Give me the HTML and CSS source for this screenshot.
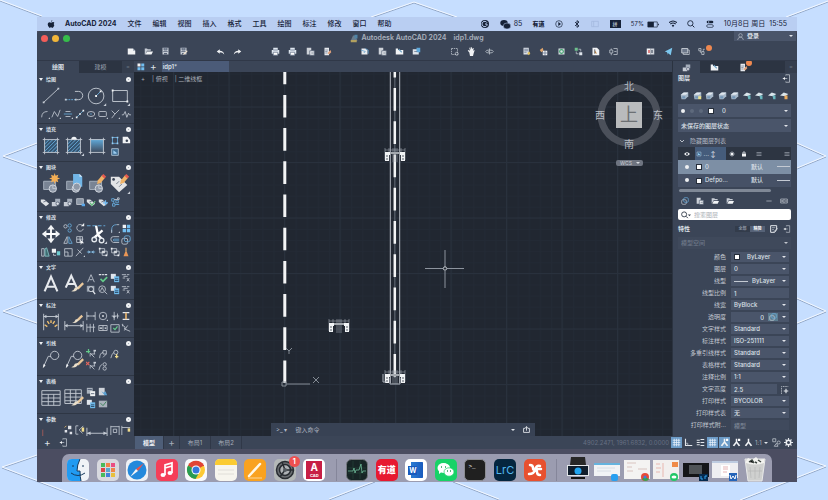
FILE: index.html
```html
<!DOCTYPE html>
<html lang="zh-CN">
<head>
<meta charset="utf-8">
<meta name="viewport" content="width=device-width, initial-scale=1">
<title>Autodesk AutoCAD 2024 - idp1.dwg</title>
<link rel="stylesheet" href="styles.css">
</head>
<body>
<svg class="defs" width="0" height="0" aria-hidden="true">
  <defs>
    <!-- large palette icons, 24 x 24 -->
    <symbol id="line" viewBox="0 0 24 24"><path d="M4 19 20 4" class="s"/><path d="M3 18h2v2H3zM19 3h2v2h-2z" class="f"/></symbol>
    <symbol id="pline" viewBox="0 0 24 24"><path d="M13 7h4a4.500 4.500 0 0 1 0 9h-2" class="s"/><path d="M3 16h12" class="b" stroke-dasharray="2 1"/><path d="M2 15h2v2H2zM13 15h2v2h-2z" class="f"/></symbol>
    <symbol id="circle" viewBox="0 0 24 24"><circle cx="11" cy="12" r="8.500" class="s"/><path d="m11 12 5-5" class="b"/><path d="M10 11h2v2h-2zM15 6h2v2h-2z" class="w"/><path d="M22 20v3h-3z" class="f"/></symbol>
    <symbol id="rect" viewBox="0 0 24 24"><path d="M4 6h16v12H4z" class="s"/><path d="M3 5h2v2H3zM19 17h2v2h-2z" class="w"/><path d="M23 20v3h-3z" class="f"/></symbol>
    <symbol id="hatch" viewBox="0 0 24 24"><path d="M5 5h14v14H5z" fill="#34536f"/><path d="m5 10 5-5M5 14l9-9M5 18l13-13M8 19 19 8M12 19l7-7M16 19l3-3" class="b"/><path d="M3 5h18M3 19h18M5 3v18M19 3v18" class="s"/></symbol>
    <symbol id="hatch2" viewBox="0 0 24 24"><use href="#hatch"/><path d="M9 5q0-3 3-3t3 3z" class="w"/><path d="M23 20v3h-3z" class="f"/></symbol>
    <linearGradient id="g1" x1="0" y1="0" x2="0" y2="1"><stop offset="0" stop-color="#5fa8d8"/><stop offset="1" stop-color="#3e4a5d"/></linearGradient>
    <symbol id="grad" viewBox="0 0 24 24"><path d="M5 5h14v14H5z" fill="url(#g1)"/><path d="M3 5h18M3 19h18M5 3v18M19 3v18" class="s"/></symbol>
    <symbol id="blk" viewBox="0 0 24 24"><path d="M4 9h13v9H4z" fill="#798494" stroke="#aab3c0"/><circle cx="14" cy="17" r="4" fill="#8e98a7" stroke="#d5dae1"/><path d="M14 13v4h4" class="s"/></symbol>
    <symbol id="blk1" viewBox="0 0 24 24"><use href="#blk"/><path d="m16 0 1 3 3-1-1 3 3 1-3 1 1 3-3-1-1 3-1-3-3 1 1-3-3-1 3-1-1-3 3 1z" fill="#f3ae55"/></symbol>
    <symbol id="blk2" viewBox="0 0 24 24"><use href="#blk"/><path d="M11 1h7l3 3v11H11z" fill="#71b5e6"/><path d="M18 1v3h3" fill="#d9ecfa"/><circle cx="15" cy="15" r="4" fill="#8e98a7" stroke="#d5dae1"/></symbol>
    <symbol id="blk3" viewBox="0 0 24 24"><use href="#blk"/><path d="m12 12 1-4 5-6 3 3-5 6z" fill="#efb267"/><path d="m17 3 2-2 3 3-2 2z" fill="#e45a4f"/></symbol>
    <symbol id="tag" viewBox="0 0 24 24"><path d="M2 4h9l9 9-9 8-9-9z" fill="#e3e4e6"/><circle cx="5" cy="7" r="1.500" fill="#3b4557"/><path d="m8 12 3-3M11 15l3-3" stroke="#707987"/><path d="m12 12 1-4 5-6 3 3-5 6z" fill="#efb267"/><path d="m17 3 2-2 3 3-2 2z" fill="#e45a4f"/><path d="M23 20v3h-3z" class="f"/></symbol>
    <symbol id="move" viewBox="0 0 24 24"><path d="M12 4v16M4 12h16" stroke="#fff" stroke-width="2"/><path d="m12 2 4 5H8zM12 22l-4-5h8zM2 12l5-4v8zM22 12l-5 4V8z" class="w"/></symbol>
    <symbol id="trim" viewBox="0 0 24 24"><path d="M1 3h20" class="b" stroke-dasharray="4 2"/><path d="m11 3 2 10 4 4M18 8 9 16" stroke="#fff" stroke-width="2.500" fill="none"/><circle cx="9" cy="18" r="2.500" class="s2"/><circle cx="17" cy="19" r="2.500" class="s2"/><path d="M23 20v3h-3z" class="f"/></symbol>
    <symbol id="mtext" viewBox="0 0 24 24"><path d="m5 20 7-16 7 16M8 15h8" stroke="#e6e9ed" stroke-width="2.300" fill="none"/></symbol>
    <symbol id="brush" viewBox="0 0 24 24"><path d="m22 11-6 6" stroke="#e8c79b" stroke-width="2.500"/><path d="M17 15q-1 6-8 5 3-1 4-4z" fill="#eadfca"/></symbol>
    <symbol id="mtext2" viewBox="0 0 24 24"><path d="m3 16 6-13 6 13M5 12h8" stroke="#e6e9ed" stroke-width="2.300" fill="none"/><use href="#brush"/></symbol>
    <symbol id="dim" viewBox="0 0 24 24"><path d="M4 3v18M20 3v18M4 6h16" class="s"/><path d="m4 6 3-2v4zM20 6l-3 2V4z" class="f"/><path d="m8 17-3-2M10 14l-2-3M14 14l2-3M16 17l3-2M12 13v-3" stroke="#f0c070" stroke-width="1.500"/></symbol>
    <symbol id="dim2" viewBox="0 0 24 24"><path d="M2 11v10M22 11v10M2 16h20" class="s"/><path d="m2 16 3-2v4zM22 16l-3 2v-4z" class="f"/><path d="m21 5-5 5" stroke="#e8c79b" stroke-width="2.500"/><path d="M17 9q-1 5-7 4 3-1 4-4z" fill="#eadfca"/></symbol>
    <symbol id="lead" viewBox="0 0 24 24"><circle cx="16" cy="7" r="4.500" class="s"/><path d="M12 8H9L4 19" class="s"/><path d="m3 21 1-5 2 2z" class="w"/></symbol>
    <symbol id="lead2" viewBox="0 0 24 24"><use href="#lead"/><use href="#brush"/></symbol>
    <symbol id="table" viewBox="0 0 24 24"><path d="M2 4h20v16H2zM2 8h20M2 12h20M2 16h20M9 8v12M15 8v12" class="s"/></symbol>
    <symbol id="table2" viewBox="0 0 24 24"><path d="M2 3h18v15H2zM2 7h18M2 11h18M2 15h14M8 3v15M14 3v15" class="s"/><use href="#brush"/></symbol>
    <symbol id="par" viewBox="0 0 24 24"><path d="M3 5v14" stroke="#a05a5a"/></symbol>
    <symbol id="pdim" viewBox="0 0 24 24"><path d="M1 3v14M23 3v14M1 9h22" class="s"/><path d="m1 9 4-2v4zM23 9l-4-2v4z" class="f"/><path d="M9 15q3-4 6 0z" fill="#f0d890"/></symbol>
    <!-- small icons, 12 x 12 -->
    <symbol id="arc" viewBox="0 0 12 12"><path d="M2 10q0-7 7-7" class="s"/><path d="M12 10v2h-2z" class="f"/></symbol>
    <symbol id="spl" viewBox="0 0 12 12"><path d="M1 10 4 3l4 6 3-8" class="s"/><path d="M12 10v2h-2z" class="f"/></symbol>
    <symbol id="div" viewBox="0 0 12 12"><path d="M3 3h6M3 9h6" class="s"/><path d="M1 6h10" class="b"/><path d="M12 10v2h-2z" class="f"/></symbol>
    <symbol id="seg" viewBox="0 0 12 12"><path d="m2 10 8-8" class="b"/><path d="M1 9h2v2H1zM9 1h2v2H9zM5 5h2v2H5z" class="w"/></symbol>
    <symbol id="ell" viewBox="0 0 12 12"><ellipse cx="6" cy="6" rx="4.500" ry="3" class="s"/><path d="M5 6h2" class="b"/><path d="M12 10v2h-2z" class="f"/></symbol>
    <symbol id="rc" viewBox="0 0 12 12"><rect x="1" y="3" width="9" height="6" rx="1" class="s"/><path d="M12 10v2h-2z" class="f"/></symbol>
    <symbol id="ray" viewBox="0 0 12 12"><path d="m2 2 4 4 5-5M6 6l-4 5" class="s"/><path d="M12 10v2h-2z" class="f"/></symbol>
    <symbol id="zig" viewBox="0 0 12 12"><path d="M1 7h2l2-4 2 7 2-5 1 2h2" class="s"/></symbol>
    <symbol id="bnd" viewBox="0 0 12 12"><path d="M3 3h6v7H3z" class="b"/><path d="M2 2h2v2H2zM8 2h2v2H8zM2 9h2v2H2zM8 9h2v2H8z" fill="#9ccdf0"/></symbol>
    <symbol id="wipe" viewBox="0 0 12 12"><path d="M2 2h6l3 4v4H2z" class="w"/><circle cx="7" cy="7" r="1.500" fill="#3b4557"/></symbol>
    <symbol id="reg" viewBox="0 0 12 12"><path d="M2 2h8v8H2z" fill="#3e6c92" stroke="#b5c6d6"/><path d="M4 8V4l4 3v1z" fill="#9ccdf0"/></symbol>
    <symbol id="tg" viewBox="0 0 12 12"><path d="M1 3h4l6 5-4 3-6-5z" fill="#dfe2e6"/><path d="m4 6 3-1" stroke="#596478"/></symbol>
    <symbol id="blks" viewBox="0 0 12 12"><path d="M1 6h6v5H1z" class="f"/><path d="M5 2h6v5H5z" fill="#a4adba"/><circle cx="8" cy="8" r="2" fill="#e0e4ea" stroke="#596478"/></symbol>
    <symbol id="img" viewBox="0 0 12 12"><path d="M2 2h8v7H2z" fill="#8b96a5" stroke="#c0c7d0"/><path d="M8 8h4v3H8z" fill="#5aa8ea"/></symbol>
    <symbol id="tgg" viewBox="0 0 12 12"><use href="#tg"/><path d="m5 7 2 3 4-5" stroke="#65bb7d" stroke-width="1.500" fill="none"/></symbol>
    <symbol id="tgb" viewBox="0 0 12 12"><use href="#tg"/><path d="M9 4v6M6 7h6" stroke="#6fb8f0" stroke-width="1.500"/></symbol>
    <symbol id="net" viewBox="0 0 12 12"><path d="M2 2h3v3H2zM7 4h3v3H7zM3 8h3v3H3zM8 9h3M4 5l1 3M6 9h4" class="b"/><path d="M5 3h4M9 1h2v2H9z" class="s"/></symbol>
    <symbol id="copy" viewBox="0 0 12 12"><circle cx="3" cy="4" r="2" class="s"/><circle cx="8" cy="3" r="2" class="b"/><circle cx="8" cy="9" r="2" class="b"/></symbol>
    <symbol id="rot" viewBox="0 0 12 12"><path d="M9 3a4 4 0 1 0 1 4" class="s"/><path d="M7 4h4V0z" class="w"/></symbol>
    <symbol id="mir" viewBox="0 0 12 12"><path d="M5 2v8H1z" class="s"/><path d="M7 2v8h4z" class="b"/></symbol>
    <symbol id="str" viewBox="0 0 12 12"><path d="M2 2h7v7H2zM2 5h8M6 2v7" class="s"/><path d="m6 5 5 5H8l-1 2z" class="w"/></symbol>
    <symbol id="fil" viewBox="0 0 12 12"><path d="M2 11V8q0-6 6-6" class="b"/><path d="M8 2h3M2 8v4" class="s"/><path d="M12 10v2h-2z" class="f"/></symbol>
    <symbol id="arr" viewBox="0 0 12 12"><path d="M2 2h4v4H2z" class="w"/><path d="M7 2h4v4H7zM2 7h4v4H2zM7 7h4v4H7z" fill="#72bdf0"/></symbol>
    <symbol id="off" viewBox="0 0 12 12"><path d="M11 2H4Q1 2 1 5t3 4h7" class="s"/><path d="M11 5H5q-1 0-1 1t1 1h6" class="b"/></symbol>
    <symbol id="cub" viewBox="0 0 12 12"><rect x="1" y="4" width="7" height="7" rx="2" class="s"/><rect x="4" y="1" width="7" height="7" rx="2" class="b"/></symbol>
    <symbol id="ali" viewBox="0 0 12 12"><path d="M2 2h3v9H2z" class="s"/><path d="m6 2 2-1 3 10H6z" fill="#3e6c72" stroke="#86c3c7"/></symbol>
    <symbol id="chg" viewBox="0 0 12 12"><path d="M1 2h5v5H1z" class="w"/><path d="M7 5h4v5H7z" fill="#6fcbd0"/><path d="M3 8v2h3" class="s"/></symbol>
    <symbol id="scl" viewBox="0 0 12 12"><path d="M2 2h9v9H2zM2 6h4v5" class="s"/></symbol>
    <symbol id="brk" viewBox="0 0 12 12"><path d="m1 11 9-10M3 3l5 5" class="s"/><path d="M12 10v2h-2z" class="f"/></symbol>
    <symbol id="joi" viewBox="0 0 12 12"><path d="M1 6h10" class="b"/><path d="m5 6-2-2v4zM7 6l2-2v4z" fill="#9ccdf0"/></symbol>
    <symbol id="grp" viewBox="0 0 12 12"><path d="M2 2h6v5H2zM5 5h6v5H5z" class="s"/><path d="M1 1h2v2H1zM9 9h2v2H9zM5 5h3v2H5z" class="w"/></symbol>
    <symbol id="cln" viewBox="0 0 12 12"><path d="M6 1v6" stroke="#d7a46b" stroke-width="1.500"/><path d="M5 6h2l2 5H3z" fill="#e99555"/></symbol>
    <symbol id="A" viewBox="0 0 12 12"><path d="m2 11 4-9 4 9M4 8h4" class="s"/></symbol>
    <symbol id="chk" viewBox="0 0 12 12"><path d="M1 2h3M5 2h2M8 2h3" class="s2"/><path d="m3 7 3 3 5-5" stroke="#64c98a" stroke-width="2" fill="none"/></symbol>
    <symbol id="fld" viewBox="0 0 12 12"><path d="M1 1h6v6H1z" fill="#dfe5ec"/><path d="M5 4h6v7H5z" fill="#6fbbec"/><path d="M6 7h4M6 9h4" stroke="#25405c"/></symbol>
    <symbol id="eq" viewBox="0 0 12 12"><path d="M1 2h5M3 4h5M2 6h3M7 6l3 4M10 6l-3 4M7 2h3" class="s"/></symbol>
    <symbol id="fnd" viewBox="0 0 12 12"><path d="M1 1h9v7H1z" fill="#98a2b0"/><circle cx="6" cy="5" r="3" fill="#3b4557" stroke="#dde1e6"/><path d="m8 7 3 4" class="s2"/></symbol>
    <symbol id="mag" viewBox="0 0 12 12"><circle cx="5" cy="5" r="4" class="s"/><path d="m8 8 3 3M3 7l2-4 2 4" class="s"/></symbol>
    <symbol id="dl" viewBox="0 0 12 12"><path d="M1 1v10M11 1v10M1 6h10" class="s"/><path d="m1 6 2-1v2zM11 6 9 5v2z" class="f"/></symbol>
    <symbol id="dr" viewBox="0 0 12 12"><circle cx="6" cy="6" r="4.500" class="s"/><path d="M5 5h2v2H5z" class="w"/><path d="M12 10v2h-2z" class="f"/></symbol>
    <symbol id="do" viewBox="0 0 12 12"><path d="M5 1v10M2 6h9M9 3v6" class="s"/><path d="m5 9-2-3h4z" class="f"/></symbol>
    <symbol id="ds" viewBox="0 0 12 12"><path d="M2 2h8M2 10h8" class="s2"/><path d="M6 2v8" stroke="#e6b36b" stroke-width="2"/></symbol>
    <symbol id="dc" viewBox="0 0 12 12"><path d="M1 1v10M5 1v10M9 1v10M1 5h10" class="s"/></symbol>
    <symbol id="tol" viewBox="0 0 12 12"><path d="M1 3h10v6H1zM6 3v6" class="s"/><path d="M2 6h3M8 6h2" class="s2"/></symbol>
    <symbol id="ins" viewBox="0 0 12 12"><path d="M1 2h10M1 2v9h10V2" class="s"/><path d="m4 6 2 2 3-4" stroke="#64c98a" stroke-width="1.500" fill="none"/></symbol>
    <symbol id="jog" viewBox="0 0 12 12"><path d="m1 2 4 3-1 2 7 3M8 3 4 9M2 1v3" class="s"/></symbol>
    <symbol id="pbx" viewBox="0 0 12 12"><path d="M1 1v11M11 1v11M1 2h10M4 5h4v4H4z" class="s"/></symbol>
    <symbol id="pbl" viewBox="0 0 12 12"><path d="M1 1v11M1 3h10" class="s"/><path d="M8 4h3v4H8z" fill="#f0dc8c"/></symbol>
    <symbol id="l" viewBox="0 0 12 12"><path d="M5 9V5l5 5M6 6h5M10 2v4" class="s"/><path d="M9 1h3v2H9z" class="f"/></symbol>
    <symbol id="l1" viewBox="0 0 12 12"><use href="#l"/><path d="M3 0v5M0 3h5" stroke="#64c98a" stroke-width="1.500"/></symbol>
    <symbol id="l2" viewBox="0 0 12 12"><use href="#l"/><path d="m0 1 4 4M4 1 0 5" stroke="#e2655c" stroke-width="1.500"/></symbol>
    <symbol id="l3" viewBox="0 0 12 12"><path d="M2 11q0-6 4-7M6 10l4-4" class="s"/><path d="M6 2h4v4H6z" class="s"/></symbol>
    <symbol id="l4" viewBox="0 0 12 12"><path d="M1 11q1-6 4-7" class="s"/><circle cx="8" cy="4" r="2" class="s"/><circle cx="8" cy="9" r="2" class="s"/></symbol>
    <symbol id="l5" viewBox="0 0 12 12"><path d="M1 11q1-6 4-7" class="s"/><circle cx="7" cy="4" r="2.500" class="s"/><path d="M8 6v5M6 9h4" stroke="#f0dc8c" stroke-width="1.500"/></symbol>
    <symbol id="td" viewBox="0 0 12 12"><path d="M1 1h7v7H1z" fill="#aab2bd"/><path d="M5 5h6v6H5z" class="w"/><path d="M6 8h4M2 3h5" stroke="#4b586d"/></symbol>
    <symbol id="tb" viewBox="0 0 12 12"><path d="M1 1h7v9H1z" fill="#cfd4db"/><path d="m4 5 3 2 2-2 2 5H8z" fill="#5aa0d2"/></symbol>
    <symbol id="tgn" viewBox="0 0 12 12"><path d="M1 2h10v8H1z" fill="#a9b1bc"/><path d="m3 5 3 3 4-5" stroke="#337f50" fill="none"/></symbol>
    <symbol id="gc" viewBox="0 0 12 12"><path d="M6 1h4v4H6zM2 6h3v3H2zM8 8h3v3H8z" fill="#dfe2e8"/><path d="m2 3 2-2" stroke="#f0c070"/></symbol>
    <symbol id="lk" viewBox="0 0 12 12"><path d="M4 1H1v10h3M10 1 5 6l4 4" class="s"/><path d="M8 3h3v5H8z" fill="#f0dc8c"/></symbol>
    <symbol id="new" viewBox="0 0 12 12"><path d="M1 2h7l3 3v5H1z" class="w"/><path d="M8 2v3h3" fill="#9aa4b3"/></symbol>
    <symbol id="open" viewBox="0 0 12 12"><path d="M1 2h3l1 1h4v2H4l-2 5H1z" class="f"/><path d="M4 6h8l-2 4H2z" class="w"/></symbol>
    <symbol id="save" viewBox="0 0 12 12"><path d="M2 1h8v9H2z" class="f"/><path d="M4 1h4v3H4zM3 6h6" stroke="#566175" fill="#8d98a7"/><path d="M4 8h4v2H4z" fill="#566175"/></symbol>
    <symbol id="saveas" viewBox="0 0 12 12"><use href="#save"/><path d="m6 10 5-5" stroke="#f0e3d0" stroke-width="1.500"/></symbol>
    <symbol id="undo" viewBox="0 0 12 12"><path d="m1 6 4-3v2q5 0 6 5-2-3-6-3v2z" class="w"/></symbol>
    <symbol id="redo" viewBox="0 0 12 12"><path d="M11 6 7 3v2q-5 0-6 5 2-3 6-3v2z" class="w"/></symbol>
    <symbol id="prt" viewBox="0 0 12 12"><path d="M3 1h6v3H3zM1 4h10v5H1z" fill="#dfe7f0"/><path d="M3 7h6v4H3z" fill="#fff" stroke="#65748b"/><path d="M3 4h6" stroke="#65748b"/></symbol>
    <symbol id="pub" viewBox="0 0 12 12"><path d="M1 1h6v9H1z" fill="#cdd2d9"/><path d="M5 5h6v6H5z" fill="#e9ecf0" stroke="#5a6679"/><path d="M7 8h3" stroke="#5a6679"/></symbol>
    <symbol id="pg" viewBox="0 0 12 12"><path d="M2 1h6v10H2z" fill="#e6e9ee"/><path d="M3 4h4M3 6h3M3 8h3" stroke="#77849a"/><path d="m6 8 4-4 1 3-3 3z" fill="#e3a37c"/></symbol>
    <symbol id="imp" viewBox="0 0 12 12"><path d="M2 2h5l3 2v6H2z" fill="#e9ecf0"/><path d="m1 4 6 2-2 2M7 2l4 2v5" stroke="#5e9cc9" fill="none"/></symbol>
    <symbol id="exp" viewBox="0 0 12 12"><path d="M1 2h3v2h7v6H1z" class="w"/><path d="m5 3 4 4" stroke="#6fa4c7" stroke-width="1.500"/></symbol>
    <symbol id="mapi" viewBox="0 0 12 12"><path d="M1 3h8v7H1z" fill="#dfe4ea"/><path d="M6 1h5v6H6z" fill="#5ea9dc"/><path d="M3 6h4" stroke="#63738b"/></symbol>
    <symbol id="zw" viewBox="0 0 12 12"><path d="M2 2h8v8H2z" class="s" stroke-dasharray="2 1"/><circle cx="9" cy="9" r="2" class="s"/></symbol>
    <symbol id="hand" viewBox="0 0 12 12"><path d="m3 7-2-2 1-1 2 1-1-4h1l1 3V0h1l1 3 1-2 1 1-1 3 2-1v1L9 8l-1 4H4z" class="w"/></symbol>
    <symbol id="orb" viewBox="0 0 12 12"><ellipse cx="6" cy="6" rx="5" ry="2" class="s"/><path d="M6 2v8M4 6h1" class="s"/></symbol>
    <symbol id="prop" viewBox="0 0 12 12"><path d="M2 1h7v9H2z" fill="#d9dee5"/><path d="M3 3h5M3 5h5M3 7h3" stroke="#63738b"/><path d="m7 8 3-2 1 3-2 2z" fill="#e2c15d"/></symbol>
    <symbol id="edit" viewBox="0 0 12 12"><path d="M1 1h9v6l-3 4H1z" class="s2"/><path d="M3 4h5M3 7h3" class="s"/><path d="m6 10 5-5" class="s2"/></symbol>
    <symbol id="ttp" viewBox="0 0 12 12"><path d="M5 5h6v6H5z" class="w"/><path d="m1 4 4-3 1 4-3 2z" fill="#dda56d"/><path d="M8 5v6M5 8h6" stroke="#63738b"/></symbol>
    <symbol id="ref" viewBox="0 0 12 12"><path d="M2 2h8v8H2z" fill="#dce3e6"/><circle cx="6" cy="6" r="2.500" fill="none" stroke="#3ea16d" stroke-width="1.500"/></symbol>
    <symbol id="cmp" viewBox="0 0 12 12"><path d="M1 1h4v4H1z" fill="#6ec28d"/><path d="M7 7h4v4H7z" fill="#dfe5ec"/><path d="M6 3h3v3M3 6v3h3" class="s"/></symbol>
    <symbol id="pdf" viewBox="0 0 12 12"><path d="M2 1h6l3 3v7H2z" class="w"/><path d="M5 8V4l3 5z" fill="#c7883e"/><path d="M5 3v6" stroke="#434a56"/></symbol>
    <symbol id="sht" viewBox="0 0 12 12"><path d="M6 2h5v8H6M1 4h4v4H1zM3 2v2M3 8v3M7 6h3" class="s"/></symbol>
    <symbol id="dif" viewBox="0 0 12 12"><path d="M1 2h5v8H1z" class="w"/><path d="M6 2h5v8H6z" fill="#cfd4db"/><path d="M3 4h2v4H3z" fill="#d35c5c"/><path d="M7 4h2v4H7z" fill="#656e7d"/></symbol>
    <symbol id="send" viewBox="0 0 12 12"><path d="m1 6 10-5-2 10-4-3v3L4 7z" fill="#7cc7ee"/></symbol>
    <symbol id="cas" viewBox="0 0 12 12"><path d="M3 4h8v6H3z" class="s"/><path d="M1 2h8v6H1z" fill="#6d788b" stroke="#dfe4ea"/></symbol>
    <symbol id="nod" viewBox="0 0 12 12"><path d="M1 2h3v3H1zM5 6h3v4H5zM3 5v2h2M7 5V3h2" class="s"/></symbol>
    <symbol id="lay" viewBox="0 0 12 12"><path d="m1 5 4-3h6v5l-4 4H2z" fill="#a7b8c9"/><path d="m1 5 4-3h6L8 5z" fill="#e0e7ee"/><path d="M3 7h4v3H3z" fill="#7295b6"/></symbol>
    <symbol id="lay2" viewBox="0 0 12 12"><use href="#lay"/><path d="M7 7h4v4H7z" fill="#e9df8c"/></symbol>
    <symbol id="layf" viewBox="0 0 12 12"><path d="m0 6 5-4 6 2-4 3z" fill="#d9e4ea"/><path d="M6 6h4v5H7z" fill="#68b6bd"/></symbol>
    <symbol id="layo" viewBox="0 0 12 12"><path d="m0 6 5-4 6 2-4 3z" fill="#d9e4ea"/><path d="M6 6h4v5H6z" fill="#e9aa5c"/></symbol>
    <symbol id="pin" viewBox="0 0 12 12"><path d="M5 2V1h5v10H5v-1M1 6h6" class="s"/><path d="m1 6 3-2v4z" class="w"/></symbol>
    <symbol id="fol" viewBox="0 0 12 12"><path d="M1 2h4l1 1h4v2H4l-3 5z" class="f"/><path d="M4 6h8l-2 4H2z" class="w"/></symbol>
    <symbol id="lst" viewBox="0 0 12 12"><path d="M1 3h10M1 6h10M1 9h10" class="s"/></symbol>
    <symbol id="bars" viewBox="0 0 12 12"><path d="M1 3h4M1 6h4M1 9h4M6 2h5M6 6h5M6 10h5" class="s2"/></symbol>
    <symbol id="eye" viewBox="0 0 12 12"><path d="M0 6q6-7 12 0-6 7-12 0z" class="w"/><circle cx="6" cy="6" r="2" fill="#2d3542"/></symbol>
    <symbol id="sun" viewBox="0 0 12 12"><path d="M6 0v12M0 6h12M2 2l8 8M10 2l-8 8" class="s"/><circle cx="6" cy="6" r="3" class="w"/></symbol>
    <symbol id="lock" viewBox="0 0 12 12"><path d="M2 5h8v6H2z" class="w"/><path d="M4 5V2h4v3" class="s2"/></symbol>
    <symbol id="grid" viewBox="0 0 12 12"><path d="M1 3h10M1 6h10M1 9h10M3 1v10M6 1v10M9 1v10" stroke="#e8f2fb"/></symbol>
    <symbol id="ort" viewBox="0 0 12 12"><path d="M2 1v9h9" class="s2"/><path d="M5 10V7H2" class="s"/></symbol>
    <symbol id="ann" viewBox="0 0 12 12"><path d="M5 1h2v4l4 5-2 1-3-4-3 4-2-1 4-5z" class="w"/></symbol>
    <symbol id="ann2" viewBox="0 0 12 12"><use href="#ann"/><path d="M8 1h3v3H8z" fill="#fff"/></symbol>
    <symbol id="iso" viewBox="0 0 12 12"><path d="M1 1h4v4H1zM6 7l-3 4h5z" class="s"/><circle cx="9" cy="6" r="2" class="s"/></symbol>
    <symbol id="gear" viewBox="0 0 12 12"><circle cx="6" cy="6" r="3" fill="none" stroke="#eef1f4" stroke-width="2"/><path d="M6 0v3M6 9v3M0 6h3M9 6h3M2 2l2 2M8 8l2 2M10 2 8 4M4 8l-2 2" class="s2"/></symbol>
    <symbol id="opt" viewBox="0 0 12 12"><circle cx="6" cy="6" r="6" class="w"/><circle cx="6" cy="6" r="1.500" fill="#98a1b0"/></symbol>
    <symbol id="share" viewBox="0 0 12 12"><path d="M4 4H1v7h10V4H8M6 8V1M4 3l2-2 2 2" class="s2"/></symbol>
    <!-- clamp section used three times in the drawing -->
    <symbol id="clamp" viewBox="0 0 22 14"><path d="M1 2h20M1 0v12M21 0v12M5 0v5M17 0v5M9 0v14M13 0v14M11 0v14" stroke="#9ea5ae" stroke-width=".6"/><path d="M1 4h20v3h-5V6H6v1H1zM1 7h4v6H1zM17 7h4v6h-4z" fill="#f1f3f5"/><path d="M2 8h2M2 11h2M18 8h2M18 11h2M6 5h10" stroke="#303844" stroke-width=".8"/></symbol>
  </defs>
</svg>

<svg class="backdrop" viewBox="0 0 828 500" preserveAspectRatio="none" aria-hidden="true">
  <g class="edge-shadow"><path d="m0 1 42 16M371 18l43-15 43 15M786 18l42-16M37 144 3 157l34 12M37 299 3 312l34 12M37 456 2 468l86 33M797 144l29 13-29 12M797 299l29 13-29 12M797 457l29 10-86 34M375 482l-46 18M453 482l46 18"/></g>
  <g class="edge-light"><path d="m0 0 42 16M371 17l43-15 43 15M786 17l42-16M37 143 3 156l34 12M37 298 3 311l34 12M37 455 2 467l86 33M797 143l29 13-29 12M797 298l29 13-29 12M797 456l29 10-86 34M375 481l-46 18M453 481l46 18"/></g>
</svg>

<div class="screen">
  <header class="menubar">
    <svg class="apple" viewBox="0 0 12 12" aria-label="Apple"><path d="M8 0q0 2-2 3 0-2 2-3M6 4q4-2 5 0-2 2 0 4-1 3-3 4-1-1-2-1t-2 1Q1 10 1 6q1-4 5-2"/></svg>
    <nav class="menus" aria-label="菜单">
      <a href="#" class="appname">AutoCAD 2024</a><a href="#">文件</a><a href="#">编辑</a><a href="#">视图</a><a href="#">插入</a><a href="#">格式</a><a href="#">工具</a><a href="#">绘图</a><a href="#">标注</a><a href="#">修改</a><a href="#">窗口</a><a href="#">帮助</a>
    </nav>
    <div class="tray">
      <svg viewBox="0 0 12 12"><circle cx="6" cy="6" r="6"/><path d="M9 4a4 4 0 1 0 0 4V6H6" fill="none" stroke="#b9cef2" stroke-width="1.500"/></svg>
      <span class="wx"><svg viewBox="0 0 14 12"><ellipse cx="5" cy="4" rx="5" ry="4"/><ellipse cx="9" cy="8" rx="5" ry="4" stroke="#b9cef2" stroke-width=".7"/></svg>85</span>
      <b class="yd">有道</b>
      <svg viewBox="0 0 12 12"><circle cx="6" cy="6" r="5" fill="none" stroke="#162238"/><path d="m5 3 4 3-4 3z"/></svg>
      <svg viewBox="0 0 12 12"><path d="m3 3 6 6-3 2V1l3 2-6 6" fill="none" stroke="#162238" stroke-width="1.300"/></svg>
      <svg class="faint" viewBox="0 0 12 12"><path d="M1 2h10v8H1zM4 2v8" fill="none" stroke="#7c93bd"/></svg>
      <span class="ime">拼</span>
      <span class="batt">57%<svg viewBox="0 0 14 8"><path d="M1 1h11v6H1z" fill="none" stroke="#39475f"/><path d="M1 1h7v6H1zM13 3h1v2h-1z"/></svg></span>
      <svg viewBox="0 0 12 12"><path d="M0 4q6-5 12 0M2 6q4-3 8 0" fill="none" stroke="#162238" stroke-width="1.600"/><path d="m4 8 2 3 2-3q-2-2-4 0"/></svg>
      <svg viewBox="0 0 12 12"><circle cx="5" cy="5" r="4" fill="none" stroke="#162238" stroke-width="1.300"/><path d="m8 8 3 3" stroke="#162238" stroke-width="1.500"/></svg>
      <svg viewBox="0 0 12 12"><rect x="1" y="1" width="10" height="4" rx="2"/><rect x="1" y="7" width="10" height="4" rx="2" fill="none" stroke="#162238"/><circle cx="4" cy="3" r="1" fill="#b9cef2"/></svg>
      <time>10月8日 周日&nbsp; 15:55</time>
    </div>
  </header>

  <div class="window">
    <div class="titlebar">
      <div class="title-row">
        <div class="lights"><button aria-label="关闭"></button><button aria-label="最小化"></button><button aria-label="缩放"></button></div>
        <h1><svg viewBox="0 0 12 12"><path d="M1 9 4 2h3l3 7z" fill="#6a7c8c"/><path d="M1 8h8v3H1z" fill="#b2a15f"/><path d="M6 1h4v5H6z" fill="#4f83a6"/></svg>Autodesk AutoCAD 2024 <span>idp1.dwg</span></h1>
        <button class="login"><svg viewBox="0 0 12 12"><circle cx="6" cy="4" r="3" class="s"/><path d="M1 12q1-5 5-5t5 5" class="s"/></svg>登录<i class="caret"></i></button>
      </div>
      <div class="toolbar">
        <button aria-label="新建"><svg><use href="#new"/></svg></button><button aria-label="打开"><svg><use href="#open"/></svg></button><button aria-label="保存"><svg><use href="#save"/></svg></button><button aria-label="另存为"><svg><use href="#saveas"/></svg></button>
        <button class="first" aria-label="放弃"><svg><use href="#undo"/></svg></button><button aria-label="重做"><svg><use href="#redo"/></svg></button>
        <button class="first" aria-label="打印"><svg><use href="#prt"/></svg></button><button aria-label="批处理打印"><svg><use href="#prt"/></svg></button><button aria-label="发布"><svg><use href="#pub"/></svg></button><button aria-label="页面设置"><svg><use href="#pg"/></svg></button>
        <button class="first" aria-label="输入"><svg><use href="#imp"/></svg></button><button aria-label="附着"><svg><use href="#pub"/></svg></button><button aria-label="输出"><svg><use href="#exp"/></svg></button><button aria-label="地图"><svg><use href="#mapi"/></svg></button>
        <button class="first" aria-label="窗口缩放"><svg><use href="#zw"/></svg></button><button aria-label="平移"><svg><use href="#hand"/></svg></button><button aria-label="动态观察"><svg><use href="#orb"/></svg></button>
        <button class="first" aria-label="特性匹配"><svg><use href="#prop"/></svg></button><button aria-label="工具选项板"><svg><use href="#ttp"/></svg></button><button aria-label="参照"><svg><use href="#ref"/></svg></button><button aria-label="链接"><svg><use href="#cmp"/></svg></button><button aria-label="PDF"><svg><use href="#pdf"/></svg></button><button aria-label="图纸集"><svg><use href="#sht"/></svg></button>
        <button class="first" aria-label="比较"><svg><use href="#dif"/></svg></button><button aria-label="共享"><svg><use href="#send"/></svg></button><button aria-label="层叠"><svg><use href="#cas"/></svg></button><button class="badged" aria-label="活动"><svg><use href="#nod"/></svg></button>
      </div>
    </div>

    <div class="workspace">
      <aside class="palette">
        <div class="tabs"><button class="on">绘图</button><button class="off">建模</button><button aria-label="更多" class="more">=</button></div>
        <section><h2>绘图<svg><use href="#opt"/></svg></h2><div class="tools">
          <button class="big" aria-label="直线"><svg><use href="#line"/></svg></button><button class="big" aria-label="多段线"><svg><use href="#pline"/></svg></button><button class="big" aria-label="圆"><svg><use href="#circle"/></svg></button><button class="big" aria-label="矩形"><svg><use href="#rect"/></svg></button>
          <button aria-label="圆弧"><svg><use href="#arc"/></svg></button><button aria-label="样条曲线"><svg><use href="#spl"/></svg></button><button aria-label="等分"><svg><use href="#div"/></svg></button><button aria-label="点"><svg><use href="#seg"/></svg></button><button aria-label="椭圆"><svg><use href="#ell"/></svg></button><button aria-label="修订云线"><svg><use href="#rc"/></svg></button><button aria-label="射线"><svg><use href="#ray"/></svg></button><button aria-label="三维多段线"><svg><use href="#zig"/></svg></button>
        </div></section>
        <section><h2>填充<svg><use href="#opt"/></svg></h2><div class="tools">
          <button class="big" aria-label="图案填充"><svg><use href="#hatch"/></svg></button><button class="big" aria-label="编辑填充"><svg><use href="#hatch2"/></svg></button><button class="big" aria-label="渐变色"><svg><use href="#grad"/></svg></button><button aria-label="边界"><svg><use href="#bnd"/></svg></button><button aria-label="区域覆盖"><svg><use href="#wipe"/></svg></button><button aria-label="面域"><svg><use href="#reg"/></svg></button>
        </div></section>
        <section><h2>图块<svg><use href="#opt"/></svg></h2><div class="tools">
          <button class="big" aria-label="创建块"><svg><use href="#blk1"/></svg></button><button class="big" aria-label="插入块"><svg><use href="#blk2"/></svg></button><button class="big" aria-label="编辑块"><svg><use href="#blk3"/></svg></button><button class="big" aria-label="编辑属性"><svg><use href="#tag"/></svg></button>
          <button aria-label="定义属性"><svg><use href="#tg"/></svg></button><button aria-label="写块"><svg><use href="#blks"/></svg></button><button aria-label="替换块"><svg><use href="#blks"/></svg></button><button aria-label="基点"><svg><use href="#img"/></svg></button><button aria-label="同步属性"><svg><use href="#tgg"/></svg></button><button aria-label="管理属性"><svg><use href="#tgb"/></svg></button><button aria-label="参照管理"><svg><use href="#net"/></svg></button>
        </div></section>
        <section><h2>修改<svg><use href="#opt"/></svg></h2><div class="tools">
          <button class="big" aria-label="移动"><svg><use href="#move"/></svg></button><button aria-label="复制"><svg><use href="#copy"/></svg></button><button aria-label="旋转"><svg><use href="#rot"/></svg></button><button class="big" aria-label="修剪"><svg><use href="#trim"/></svg></button><button aria-label="圆角"><svg><use href="#fil"/></svg></button><button aria-label="阵列"><svg><use href="#arr"/></svg></button><button aria-label="镜像"><svg><use href="#mir"/></svg></button><button aria-label="拉伸"><svg><use href="#str"/></svg></button><button aria-label="偏移"><svg><use href="#off"/></svg></button><button aria-label="分解"><svg><use href="#cub"/></svg></button>
          <button aria-label="对齐"><svg><use href="#ali"/></svg></button><button aria-label="更改空间"><svg><use href="#chg"/></svg></button><button aria-label="缩放"><svg><use href="#scl"/></svg></button><button aria-label="打断"><svg><use href="#brk"/></svg></button><button aria-label="合并"><svg><use href="#joi"/></svg></button><button aria-label="编组"><svg><use href="#grp"/></svg></button><button aria-label="解组"><svg><use href="#grp"/></svg></button><button aria-label="清理"><svg><use href="#cln"/></svg></button>
        </div></section>
        <section><h2>文字<svg><use href="#opt"/></svg></h2><div class="tools">
          <button class="big" aria-label="多行文字"><svg><use href="#mtext"/></svg></button><button class="big" aria-label="文字样式"><svg><use href="#mtext2"/></svg></button><button aria-label="单行文字"><svg><use href="#A"/></svg></button><button aria-label="拼写检查"><svg><use href="#chk"/></svg></button><button aria-label="字段"><svg><use href="#fld"/></svg></button><button aria-label="缩放文字"><svg><use href="#eq"/></svg></button><button aria-label="查找"><svg><use href="#fnd"/></svg></button><button aria-label="替换"><svg><use href="#mag"/></svg></button><button aria-label="更新字段"><svg><use href="#fld"/></svg></button><button aria-label="对正"><svg><use href="#eq"/></svg></button>
        </div></section>
        <section><h2>标注<svg><use href="#opt"/></svg></h2><div class="tools">
          <button class="big" aria-label="标注"><svg><use href="#dim"/></svg></button><button class="big" aria-label="标注样式"><svg><use href="#dim2"/></svg></button><button aria-label="线性"><svg><use href="#dl"/></svg></button><button aria-label="半径"><svg><use href="#dr"/></svg></button><button aria-label="坐标"><svg><use href="#do"/></svg></button><button aria-label="间距"><svg><use href="#ds"/></svg></button><button aria-label="连续"><svg><use href="#dc"/></svg></button><button aria-label="公差"><svg><use href="#tol"/></svg></button><button aria-label="检验"><svg><use href="#ins"/></svg></button><button aria-label="折弯"><svg><use href="#jog"/></svg></button>
        </div></section>
        <section><h2>引线<svg><use href="#opt"/></svg></h2><div class="tools">
          <button class="big" aria-label="引线"><svg><use href="#lead"/></svg></button><button class="big" aria-label="引线样式"><svg><use href="#lead2"/></svg></button><button aria-label="添加引线"><svg><use href="#l1"/></svg></button><button aria-label="对齐引线"><svg><use href="#l3"/></svg></button><button aria-label="编辑引线"><svg><use href="#l5"/></svg></button><button class="fifth" aria-label="删除引线"><svg><use href="#l2"/></svg></button><button aria-label="合并引线"><svg><use href="#l4"/></svg></button>
        </div></section>
        <section><h2>表格<svg><use href="#opt"/></svg></h2><div class="tools">
          <button class="big" aria-label="表格"><svg><use href="#table"/></svg></button><button class="big" aria-label="表格样式"><svg><use href="#table2"/></svg></button><button aria-label="数据链接"><svg><use href="#td"/></svg></button><button aria-label="下载源"><svg><use href="#tb"/></svg></button><button class="fifth" aria-label="上载源"><svg><use href="#fld"/></svg></button><button aria-label="提取数据"><svg><use href="#tgn"/></svg></button>
        </div></section>
        <section><h2>参数<svg><use href="#opt"/></svg></h2><div class="tools">
          <button class="big" aria-label="约束"><svg><use href="#par"/></svg></button><button aria-label="几何约束"><svg><use href="#gc"/></svg></button><button aria-label="自动约束"><svg><use href="#lk"/></svg></button><button class="big" aria-label="标注约束"><svg><use href="#pdim"/></svg></button><button aria-label="显示约束"><svg><use href="#pbx"/></svg></button><button aria-label="隐藏约束"><svg><use href="#pbl"/></svg></button>
        </div></section>
      </aside>

      <main class="center">
        <div class="filetabs"><svg><use href="#arr"/></svg><button aria-label="新建选项卡" class="plus">+</button><button class="file">idp1*</button></div>
        <div class="canvas">
          <svg class="drawing" viewBox="134 72 538 364" preserveAspectRatio="xMidYMid slice" role="img" aria-label="图形">
            <defs>
              <pattern id="minor" x="7" y="7" width="11.100" height="11.100" patternUnits="userSpaceOnUse"><path d="M0 .5h12M.5 0v12" stroke="#232a35" fill="none"/></pattern>
              <pattern id="major" x="6.500" y="51" width="55.500" height="55.500" patternUnits="userSpaceOnUse"><path d="M0 .5h56M.5 0v56" stroke="#29313d" fill="none"/></pattern>
            </defs>
            <path d="M134 72h538v364H134z" fill="url(#minor)"/><path d="M134 72h538v364H134z" fill="url(#major)"/>
            <path d="M284.800 61.700V384" stroke="#f4f5f6" stroke-width="3" stroke-dasharray="22.600 10.600"/>
            <path d="M390.300 72v311M399.700 72v311" stroke="#b4bac2"/><path d="M394.800 72v306" stroke="#747c88" stroke-width=".8"/>
            <path d="M394.800 54.800V378" stroke="#f4f5f6" stroke-width="2.500" stroke-dasharray="22.600 10.650"/>
            <use href="#clamp" x="384" y="148" width="22" height="14"/><use href="#clamp" x="328" y="319" width="22" height="14"/><use href="#clamp" x="384" y="370" width="22" height="14"/>
            <path d="M383 374v8h3M390 378v6h10v-6" fill="none" stroke="#aeb4bd"/>
            <path d="M425 268.500h18M447 268.500h17M445 250v17M445 271v17" stroke="#8d949e"/><circle cx="445" cy="268.500" r="1.700" fill="none" stroke="#c3c8ce"/>
            <path d="M282 382h4v4h-4zM286 384h24M313 377l6 6M319 377l-6 6M286 348l3 3 3-3M289 351v3" fill="none" stroke="#8f969f" stroke-width=".9"/>
          </svg>
          <div class="viewlabel"><span>+</span><span>| 俯视</span><span>| 二维线框</span></div>
          <svg class="cube" viewBox="0 0 72 92" role="img" aria-label="ViewCube">
            <circle cx="36" cy="36" r="28" fill="none" stroke="#4b505a" stroke-width="7"/>
            <path d="M23 23h26v26H23z" fill="#b9bbbd"/>
            <g class="cubetext"><text x="36" y="11">北</text><text x="7" y="40">西</text><text x="65" y="40">东</text><text x="36" y="69">南</text><text x="36" y="42" class="top">上</text></g>
            <rect x="23" y="81" width="27" height="6" rx="2" fill="#6e7480"/><text x="33" y="86" class="wcs">WCS</text><path d="M43 83h4l-2 2z" fill="#d9dce0"/>
          </svg>
          <label class="command"><span>&gt;_ ▾</span><input type="text" placeholder="键入命令" aria-label="命令"><i class="caret"></i><svg><use href="#share"/></svg></label>
        </div>
      </main>

      <aside class="inspector">
        <div class="tabs"><button class="on" aria-label="图层"><svg><use href="#blks"/></svg></button><button class="off" aria-label="块"><svg><use href="#exp"/></svg></button><button class="off badged" aria-label="参照"><svg><use href="#pg"/></svg></button><button class="more" aria-label="更多">=</button></div>
        <section class="layers">
          <h2>图层<svg><use href="#pin"/></svg></h2>
          <div class="layertools"><svg><use href="#lay"/></svg><svg><use href="#lay2"/></svg><svg><use href="#lay"/></svg><svg><use href="#lay"/></svg><svg><use href="#lay"/></svg><svg><use href="#layf"/></svg><svg><use href="#layf"/></svg><svg><use href="#layf"/></svg><svg><use href="#layo"/></svg></div>
          <div class="combo current"><i class="bulb"></i><i class="dim"></i><i class="dim"></i><i class="swatch"></i><select aria-label="当前图层"><option>0</option></select></div>
          <div class="combo"><select aria-label="图层状态"><option>未保存的图层状态</option></select></div>
          <button class="fold"><svg viewBox="0 0 12 12"><path d="m2 4 4 4 4-4" class="s2"/></svg>隐藏图层列表</button>
          <table>
            <thead><tr><th class="c1"><svg><use href="#eye"/></svg></th><th class="c2 sorted"><svg><use href="#reg"/></svg> ... <span>↕</span></th><th class="c3"><svg><use href="#sun"/></svg></th><th class="c3"><svg><use href="#lock"/></svg></th><th class="c4"><svg><use href="#lst"/></svg></th><th class="c5"><svg><use href="#lst"/></svg></th></tr></thead>
            <tbody>
              <tr class="sel"><td><i class="bulb"></i></td><td colspan="3"><i class="swatch"></i>0</td><td>默认</td><td><hr></td></tr>
              <tr><td><i class="bulb"></i></td><td colspan="3"><i class="swatch"></i>Defpo...</td><td>默认</td><td><hr></td></tr>
            </tbody>
          </table>
          <div class="scroll"></div>
          <div class="layeractions"><svg><use href="#cub"/></svg><svg><use href="#pub"/></svg><svg><use href="#fol"/></svg><svg><use href="#fol"/></svg><span class="gap"></span><svg viewBox="0 0 12 12"><path d="M2 6h8" class="s"/></svg><svg><use href="#tol"/></svg></div>
          <label class="search"><svg viewBox="0 0 16 12"><circle cx="5" cy="5" r="4" fill="none" stroke="#3a4350" stroke-width="1.500"/><path d="m8 8 3 3" stroke="#3a4350" stroke-width="1.500"/><path d="M11 5h5l-2.500 3z" fill="#3a4350"/></svg><input type="text" placeholder="搜索图层" aria-label="搜索图层"></label>
        </section>
        <section class="props">
          <h2>特性<span class="toggle"><button>全部</button><button class="cur">精简</button></span><svg><use href="#edit"/></svg><svg><use href="#pin"/></svg></h2>
          <div class="combo disabled"><select aria-label="对象" disabled><option>模型空间</option></select></div>
          <div class="rows">
            <label for="p1">颜色</label><div class="combo"><i class="swatch"></i><select id="p1"><option>ByLayer</option></select></div>
            <label for="p2">图层</label><div class="combo"><select id="p2"><option>0</option></select></div>
            <label for="p3">线型</label><div class="combo"><hr><select id="p3"><option>ByLayer</option></select></div>
            <label for="p4">线型比例</label><div class="combo plain"><input id="p4" value="1"></div>
            <label for="p5">线宽</label><div class="combo"><select id="p5"><option>ByBlock</option></select></div>
            <label for="p6">透明度</label><div class="combo trans"><input id="p6" value="0"><svg><use href="#cub"/></svg></div>
            <label for="p7">文字样式</label><div class="combo"><select id="p7"><option>Standard</option></select></div>
            <label for="p8">标注样式</label><div class="combo"><select id="p8"><option>ISO-251111</option></select></div>
            <label for="p9">多重引线样式</label><div class="combo"><select id="p9"><option>Standard</option></select></div>
            <label for="p10">表格样式</label><div class="combo"><select id="p10"><option>Standard</option></select></div>
            <label for="p11">注释比例</label><div class="combo"><select id="p11"><option>1:1</option></select></div>
            <label for="p12">文字高度</label><div class="combo plain pick"><input id="p12" value="2.5"><svg viewBox="0 0 12 12"><path d="M2 12V2h9" class="s" stroke-dasharray="2 1"/><path d="M8 5v6M5 8h6" class="s2"/></svg></div>
            <label for="p13">打印样式</label><div class="combo"><select id="p13"><option>BYCOLOR</option></select></div>
            <label for="p14">打印样式表</label><div class="combo"><select id="p14"><option>无</option></select></div>
            <label for="p15">打印样式附...</label><div class="combo plain disabled"><input id="p15" value="模型" disabled></div>
          </div>
        </section>
      </aside>

      <div class="palettefoot"><button class="plus" aria-label="添加">+</button><button aria-label="收起"><svg><use href="#pin"/></svg></button></div>
      <footer class="status">
        <button class="on">模型</button><button class="plus" aria-label="新建布局">+</button><button>布局1</button><button>布局2</button>
        <output>4902.2471, 1961.6832, 0.0000</output>
        <div class="modes"><button class="lit" aria-label="栅格"><svg><use href="#grid"/></svg></button><button aria-label="正交"><svg><use href="#ort"/></svg></button><button aria-label="线宽"><svg><use href="#bars"/></svg></button><button class="lit" aria-label="捕捉"><svg><use href="#grid"/></svg></button><button class="lit" aria-label="注释可见性"><svg><use href="#ann2"/></svg></button><button aria-label="自动缩放"><svg><use href="#ann2"/></svg></button><button aria-label="注释"><svg><use href="#ann"/></svg></button><button class="scale">1:1<i class="caret"></i></button><button aria-label="隔离对象"><svg><use href="#iso"/></svg></button><button aria-label="设置"><svg><use href="#gear"/></svg></button></div>
      </footer>
    </div>
  </div>

  <div class="desktop">
    <nav class="dock" aria-label="程序坞">
      <a href="#" aria-label="访达"><svg viewBox="0 0 22 22"><rect width="22" height="22" rx="5" fill="#f0f3f7"/><path d="M5 0h8q-3 6-3 12h3q0 6 1 10H5q-5 0-5-5V5q0-5 5-5" fill="#219bf2"/><path d="M6 6v2M16 6v2M4 14q7 5 14 0M13 0q-3 6-3 12h3q0 6 1 10" fill="none" stroke="#16395c"/></svg></a>
      <a href="#" aria-label="启动台"><svg viewBox="0 0 22 22"><rect width="22" height="22" rx="5" fill="#d8d9df"/><path d="M4 4h4v4H4zM4 14h4v4H4z" fill="#48bb5c"/><path d="M9 4h4v4H9zM14 9h4v4h-4z" fill="#ef8548"/><path d="M14 4h4v4h-4z" fill="#ea4e83"/><path d="M4 9h4v4H4z" fill="#db4646"/><path d="M9 9h4v4H9z" fill="#59a7ce"/><path d="M9 14h4v4H9z" fill="#4280dc"/><path d="M14 14h4v4h-4z" fill="#e8c03d"/></svg></a>
      <a href="#" aria-label="Safari"><svg viewBox="0 0 22 22"><rect width="22" height="22" rx="5" fill="#eef1f5"/><circle cx="11" cy="11" r="9.500" fill="#2389dc"/><path d="m18 4-6 8-2-2z" fill="#ef5148"/><path d="m4 18 6-8 2 2z" fill="#f5f5f5"/></svg></a>
      <a href="#" aria-label="音乐"><svg viewBox="0 0 22 22"><rect width="22" height="22" rx="5" fill="#f53e58"/><path d="M9 16V6l7-2v10M9 9l7-2" fill="none" stroke="#fff" stroke-width="1.700"/><ellipse cx="7" cy="16" rx="2.500" ry="2" fill="#fff"/><ellipse cx="14" cy="14" rx="2.500" ry="2" fill="#fff"/></svg></a>
      <a href="#" aria-label="Chrome"><svg viewBox="0 0 22 22"><rect width="22" height="22" rx="5" fill="#f8f9fb"/><circle cx="11" cy="11" r="9" fill="#fcc934"/><path d="M11 11 3 6.500a9.200 9.200 0 0 1 16 0z" fill="#e04435"/><path d="M11 11 3 6.500A9.200 9.200 0 0 0 10.500 20l4-7z" fill="#279b51"/><path d="M4 6.500h15" stroke="#e04435" stroke-width="1"/><circle cx="11" cy="11" r="4.500" fill="#fff"/><circle cx="11" cy="11" r="3.500" fill="#3578dc"/></svg></a>
      <a href="#" aria-label="备忘录"><svg viewBox="0 0 22 22"><rect width="22" height="22" rx="5" fill="#f7f5ee"/><path d="M0 6V5q0-5 5-5h12q5 0 5 5v1z" fill="#fbcb32"/><path d="M3 11h16M3 15h16" stroke="#e0ded8"/></svg></a>
      <a href="#" aria-label="Pages"><svg viewBox="0 0 22 22"><rect width="22" height="22" rx="5" fill="#f9a220"/><path d="M5 17 16 5" stroke="#fff8e7" stroke-width="2.500" stroke-linecap="round"/><path d="M4 19h14" stroke="#fcd79b"/></svg></a>
      <a href="#" class="notify" aria-label="系统设置"><svg viewBox="0 0 22 22"><rect width="22" height="22" rx="5" fill="#b4b8b8"/><circle cx="11" cy="11" r="8.500" fill="#6a6e72" stroke="#282c31" stroke-width="1.500"/><circle cx="11" cy="11" r="5.500" fill="#aeb2b5" stroke="#282c31" stroke-width="1.500"/><path d="M11 11 8 3M11 11h9M11 11l-5 7" stroke="#282c31" stroke-width="1.500"/><circle cx="11" cy="11" r="2" fill="#555b61"/></svg><b>1</b></a>
      <a href="#" class="tile acad"><span><b>A</b><small>CAD</small></span></a>
      <i class="sep"></i>
      <a href="#" aria-label="活动监视器"><svg viewBox="0 0 22 22"><rect x=".5" y=".5" width="21" height="21" rx="5" fill="#172526" stroke="#75797f"/><path d="M2 9h18M2 14h18M7 2v18M14 2v18" stroke="#27473d" stroke-width=".6"/><path d="M2 12h5l1-3 1 5 1-3h3l2-6 1 9 1-2h3" fill="none" stroke="#6ebd9b" stroke-width=".8"/></svg></a>
      <a href="#" class="tile youdao">有道</a>
      <a href="#" class="tile word"><span>W</span></a>
      <a href="#" aria-label="微信"><svg viewBox="0 0 22 22"><rect width="22" height="22" rx="5" fill="#17d267"/><path d="M4 15V8q2-5 8-3 3 1 3 4H9q-3 5-5 6" fill="#fff"/><ellipse cx="8.500" cy="9" rx="6" ry="5" fill="#fff"/><ellipse cx="14" cy="13" rx="5" ry="4.200" fill="#fff" stroke="#17d267" stroke-width=".7"/><path d="M6 8h1M10 8h1M12 12h1M15 12h1" stroke="#269a56" stroke-width="1.300"/></svg></a>
      <a href="#" class="tile term">&gt;_</a>
      <a href="#" class="tile lrc">LrC</a>
      <a href="#" aria-label="XMind"><svg viewBox="0 0 22 22"><rect width="22" height="22" rx="5" fill="#e8502f"/><path d="M6 6q3 0 3 3 0 2 2 2M16 16q-3 0-3-3 0-2-2-2M11 11q1-5 5-4M11 11q-1 4-6 4M13 10h4" fill="none" stroke="#fff" stroke-width="2.500" stroke-linecap="round"/></svg></a>
      <i class="sep"></i>
      <a href="#" aria-label="打印中心"><svg viewBox="0 0 22 22"><path d="M4-2h14l1 8H3z" fill="#272727"/><path d="M0 6h22v11H0z" fill="#e2e5e8"/><path d="M1 7h20v9H1z" fill="#101d2c"/><circle cx="11" cy="12" r="3.500" fill="#21a5f1"/><path d="M4 18h14v2H4z" fill="#151515"/></svg></a>
      <a href="#" class="thumb" aria-label="访达窗口"><svg viewBox="0 0 26 22"><path d="M0 4h26v13H0z" fill="#f1f3f5"/><path d="M0 4h26v2H0z" fill="#65b3de"/><path d="M3 9h18M3 12h14" stroke="#d8dee5"/><rect x="17" y="15" width="7" height="7" rx="2" fill="#279ff0"/></svg></a>
      <a href="#" class="thumb" aria-label="Chrome 窗口"><svg viewBox="0 0 26 22"><path d="M0 1h26v19H0z" fill="#f4f3f2"/><path d="M3 4h9M3 8h5M3 12h6M14 10h9" stroke="#d9c4c0"/><circle cx="21" cy="18" r="4" fill="#e64c3b"/><path d="M18 20a4 4 0 0 0 7 0l-4-2z" fill="#32a654"/><circle cx="21" cy="18" r="1.500" fill="#3d80df"/></svg></a>
      <a href="#" class="thumb" aria-label="微信窗口"><svg viewBox="0 0 26 22"><path d="M0 1h26v19H0z" fill="#f2efee"/><path d="M10 4v14M3 5h4M3 9h5M3 13h4" stroke="#e8b7b0"/><path d="M19 3h6v5h-6z" fill="#f08b49"/><circle cx="21" cy="18" r="4" fill="#22c767"/><ellipse cx="21" cy="18" rx="2.500" ry="1.500" fill="#fff"/></svg></a>
      <a href="#" class="thumb" aria-label="Lightroom 窗口"><svg viewBox="0 0 26 22"><path d="M0 4h26v14H0z" fill="#141517"/><path d="M6 6h13v9H6z" fill="#505457"/><path d="M16 15h9v7h-9z" fill="#062a4d"/><path d="M18 17v3h2M22 20v-3h2" stroke="#32a5ef" fill="none"/></svg></a>
      <a href="#" class="thumb" aria-label="Word 窗口"><svg viewBox="0 0 26 22"><path d="M0 2h26v17H0z" fill="#eeeef1"/><path d="M0 2h26v2H0z" fill="#bdcbe0"/><path d="M9 6h9v11H9z" fill="#fff"/><path d="M11 8h5M11 10h5M11 13h4" stroke="#e6b5b5"/><path d="M17 14h8v8h-8z" fill="#2564b8"/><path d="m18 16 1 4 2-3 2 3 1-4" stroke="#fff" fill="none"/></svg></a>
      <a href="#" aria-label="废纸篓"><svg viewBox="0 0 22 22"><path d="M1 0h20l-3 22H4z" fill="#cfd0cf" stroke="#e8e9e9"/><path d="m2 2 2-3 4 2 4-3 3 3 5-1v4q-9 3-18 0z" fill="#f3f3f0"/><path d="m5 3 3-2 2 3M14 1l3 2M11 3l2 1" stroke="#3f4844" stroke-width="1.500"/><path d="m6 8 1 11M11 8v12M16 8l-1 11M4 12h14" stroke="#b1b4b3" stroke-width=".6"/></svg></a>
    </nav>
  </div>
</div>
</body>
</html>
```
FILE: styles.css
```css
* { box-sizing: border-box; }

html { height: 100%; }

body {
  margin: 0;
  height: 100vh;
  padding: 17px 31px 18px 37px;
  background: #c6deff;
  color: #dce0e7;
  font-family: Inter, "Noto Sans CJK SC", sans-serif;
  font-size: 6px;
  line-height: 8px;
  overflow: hidden;
}

button, input, select {
  margin: 0;
  padding: 0;
  border: 0;
  background: none;
  color: inherit;
  font: inherit;
  min-width: 0;
}

a { color: inherit; text-decoration: none; }
svg { width: 9px; height: 9px; flex: none; display: block; }
h1, h2 { margin: 0; font-weight: 600; }

.defs { position: absolute; }
.s { fill: none; stroke: #c3c9d2; stroke-width: 1; }
.s2 { fill: none; stroke: #e3e7ec; stroke-width: 1.5; }
.b { fill: none; stroke: #68acdc; stroke-width: 1; }
.f { fill: #c6ccd5; }
.w { fill: #f1f3f5; }

.backdrop { position: absolute; inset: 0; width: 100%; height: 100%; }
.edge-shadow { fill: none; stroke: #93a7c6; stroke-width: 1; }
.edge-light { fill: none; stroke: #f3f8ff; stroke-width: 1; }

.caret {
  border: 2px solid transparent;
  border-top: 2px solid #dfe3e9;
  border-bottom: 0;
}
.plus { font-size: 10px; line-height: 8px; padding-bottom: 2px; }

.screen {
  position: relative;
  height: 100%;
  display: flex;
  flex-direction: column;
  overflow: hidden;
  background: #4b4e62;
}

/* system menu bar */
.menubar {
  flex: none;
  height: 14px;
  padding: 0 10px;
  display: flex;
  align-items: center;
  background: #b9cef2;
  color: #162238;
  font-size: 7px;
  line-height: 12px;
  white-space: nowrap;
}
.menubar svg { width: 8px; height: 8px; fill: #162238; }
.menus { display: flex; gap: 11px; margin-left: 10px; font-weight: 500; }
.appname { font-weight: 700; }
.tray { flex: 1; margin-left: 90px; display: flex; align-items: center; justify-content: space-between; }
.wx, .batt { display: flex; align-items: center; gap: 3px; }
.menubar .wx svg { width: 11px; height: 9px; }
.menubar .batt svg { width: 12px; height: 7px; }
.batt { font-size: 6px; }
.yd { font-size: 6px; font-weight: 900; }
.ime { padding: 0 3px; background: #162238; color: #e4edfb; font-size: 5px; line-height: 8px; }
.faint { opacity: .4; }

/* application window */
.window {
  flex: 1;
  min-height: 0;
  display: flex;
  flex-direction: column;
  background: #3b4557;
  border-radius: 4px 4px 0 0;
  overflow: hidden;
}
.titlebar { flex: none; height: 30px; border-bottom: 1px solid #303848; }
.title-row {
  height: 14px;
  display: grid;
  grid-template-columns: 1fr auto 1fr;
  align-items: center;
}
.title-row h1 { display: flex; align-items: center; gap: 2px; color: #abb2be; font-size: 7px; line-height: 10px; }
.title-row h1 span { margin-left: 5px; }
.lights { display: flex; gap: 4px; padding-left: 4px; }
.lights button { width: 7px; height: 7px; border-radius: 50%; background: #f35d59; }
.lights button:nth-child(2) { background: #f1b63a; }
.lights button:nth-child(3) { background: #36bd4b; }
.login {
  justify-self: end;
  align-self: start;
  width: 62px;
  height: 10px;
  margin-right: 1px;
  padding: 0 3px;
  display: flex;
  align-items: center;
  gap: 3px;
  background: #4a556a;
  font-weight: 600;
}
.login svg { width: 7px; height: 7px; }
.login .caret { margin-left: auto; }
.toolbar { height: 12px; padding: 0 88px; display: flex; justify-content: space-between; }
.toolbar button { width: 12px; height: 12px; display: grid; place-items: center; }
.toolbar .first { margin-left: 20px; }
.badged { position: relative; }
.badged::after {
  content: "";
  position: absolute;
  top: 0;
  right: -3px;
  width: 6px;
  height: 6px;
  border-radius: 50%;
  background: #ee8850;
}

.workspace {
  flex: 1;
  min-height: 0;
  display: grid;
  grid-template-columns: 97px minmax(0, 1fr) 125px;
  grid-template-rows: minmax(0, 1fr) 13px;
}

/* palettes */
.palette, .inspector { overflow: hidden; }
.tabs { height: 12px; display: flex; background: #2c3442; }
.tabs button { display: grid; place-items: center; }
.palette .on { width: 42px; background: #3b4557; font-weight: 600; }
.palette .off { width: 43px; color: #9aa3b1; }
.tabs .more { flex: 1; background: #353e4e; color: #6c7585; }
.palette .tabs { margin-bottom: 1px; }

.palette section { padding-bottom: 3px; border-bottom: 1px solid #2e3644; }
.palette h2 {
  height: 10px;
  padding: 0 3px 0 2px;
  display: flex;
  align-items: center;
  gap: 3px;
  font-size: 5px;
}
.palette h2::before { content: ""; border: 2px solid transparent; border-top: 3px solid #eef0f3; border-bottom: 0; }
.palette h2 svg { width: 5px; height: 5px; margin-left: auto; }
.tools {
  padding: 0 2px;
  display: grid;
  grid-template-columns: repeat(8, 1fr);
  grid-auto-rows: 12px;
  grid-auto-flow: dense;
}
.tools button { display: grid; place-items: center; }
.tools .big { grid-column: span 2; grid-row: span 2; }
.tools .big svg { width: 22px; height: 22px; }
.tools svg { width: 10px; height: 10px; }
.tools .fifth { grid-column-start: 5; }
.tools .fifth + button { grid-column-start: 6; }
.palettefoot { display: flex; align-items: center; gap: 8px; padding-left: 7px; }

/* drawing area */
.center { display: flex; flex-direction: column; min-width: 0; }
.filetabs { flex: none; height: 11px; padding-left: 2px; display: flex; align-items: center; gap: 5px; }
.file { width: 67px; height: 11px; padding-left: 1px; background: #4b5b78; text-align: left; font-weight: 600; }
.canvas { position: relative; flex: 1; min-height: 0; background: #212731; overflow: hidden; }
.drawing { width: 100%; height: 100%; }
.viewlabel { position: absolute; top: 3px; left: 7px; display: flex; gap: 7px; color: #a9afb8; white-space: nowrap; }
.cube { position: absolute; top: 7px; right: 7px; width: 72px; height: 92px; }
.cubetext { fill: #b9bec5; font-size: 10px; text-anchor: middle; font-family: "Noto Sans CJK SC", sans-serif; }
.cubetext .top { fill: #6c7074; font-size: 18px; }
.wcs { fill: #c8ccd2; font-size: 5px; text-anchor: middle; }
.command {
  position: absolute;
  left: 137px;
  right: 137px;
  bottom: 0;
  height: 13px;
  padding: 0 5px;
  display: flex;
  align-items: center;
  gap: 8px;
  background: #384254;
  color: #b3bac5;
}
.command input { flex: 1; }
.command input::placeholder { color: #aeb5c0; opacity: 1; }
.command svg { width: 7px; height: 7px; }

/* status bar */
.status { grid-column: 2 / 4; padding: 0 3px 0 1px; display: flex; align-items: center; white-space: nowrap; color: #a4acb9; }
.status > button { width: 31px; height: 13px; border-right: 1px solid #303848; }
.status .on { width: 29px; background: #4e5e78; color: #f0f2f5; font-weight: 600; }
.status .plus { width: 16px; }
.status output { margin-left: auto; color: #667083; }
.modes { display: flex; align-items: center; gap: 1px; margin-left: 2px; }
.modes button { width: 11px; height: 11px; display: grid; place-items: center; }
.modes .lit { background: #6d9cc8; }
.modes .scale { width: 15px; display: flex; align-items: center; gap: 2px; }

/* inspector */
.inspector { border-left: 1px solid #2b3340; }
.inspector .on { width: 27px; background: #3b4557; }
.inspector .off { width: 29px; }
.inspector .off + .off { margin-right: 27px; }
.inspector .badged::after { top: -1px; right: 6px; }
.inspector section { padding: 0 6px 0 5px; }
.inspector h2 { height: 10px; display: flex; align-items: center; gap: 5px; font-size: 6px; }
.layers h2 svg { margin-left: auto; }
.layertools { height: 21px; display: flex; align-items: center; justify-content: space-between; padding: 3px 2px 0; }
.combo {
  position: relative;
  height: 10px;
  padding: 0 3px;
  display: flex;
  align-items: center;
  gap: 4px;
  background: #4a556a;
  font-weight: 500;
}
.combo select, .combo input { flex: 1; width: 0; height: 10px; appearance: none; }
.combo::after {
  content: "";
  border: 2px solid transparent;
  border-top: 2px solid #e3e6eb;
  border-bottom: 0;
}
.plain::after { display: none; }
.layers .combo { height: 13px; margin-bottom: 2px; }
.layers .current { gap: 5px; }
.bulb { width: 4px; height: 4px; border-radius: 50%; background: #eef0f2; display: inline-block; flex: none; }
.dim { width: 4px; height: 4px; border-radius: 50%; background: #5e697c; flex: none; }
.swatch { width: 6px; height: 6px; background: #fff; border: 1px solid #252d39; flex: none; display: inline-block; margin-right: 3px; vertical-align: middle; }
.fold { height: 13px; display: flex; align-items: center; gap: 5px; color: #b7bdc8; }
.fold svg { width: 6px; height: 6px; margin-left: 1px; }
table {
  width: 100%;
  height: 40px;
  table-layout: fixed;
  border-collapse: collapse;
  background: #465166;
  text-align: left;
}
th, td { padding: 0 1px; height: 10px; white-space: nowrap; font-weight: 500; }
thead { background: #2d3542; }
th { height: 13px; }
th svg { width: 6px; height: 6px; display: inline-block; vertical-align: middle; }
.c1 { width: 17px; text-align: center; }
.c2 { width: 31px; }
.sorted { background: #455c7b; }
.c3 { width: 12px; text-align: center; }
.c4 { width: 26px; padding-left: 6px; }
.c5 { text-align: right; }
td:first-child { text-align: center; }
td hr { width: 100%; }
.sel { background: #7d8fa5; }
hr { margin: 0; border: 0; border-top: 1px solid #c4cad3; }
.scroll { width: 92px; height: 3px; margin: 2px 0 3px 1px; border-radius: 2px; background: #7f8896; }
.layeractions { height: 12px; display: flex; align-items: center; gap: 7px; padding: 0 3px; }
.layeractions .gap { flex: 1; }
.layeractions svg { width: 8px; height: 8px; }
.search {
  height: 11px;
  margin-top: 2px;
  padding: 0 3px;
  display: flex;
  align-items: center;
  gap: 3px;
  border-radius: 2px;
  background: #fff;
}
.search svg { width: 10px; height: 8px; }
.search input { flex: 1; width: 0; color: #333; }
.search input::placeholder { color: #adb1b7; opacity: 1; }
.props h2 { height: 17px; }
.props h2 svg { width: 8px; height: 8px; }
.toggle { display: flex; margin-left: auto; background: #333c4b; font-size: 4px; line-height: 6px; color: #8c95a4; }
.toggle button { width: 15px; height: 6px; }
.toggle .cur { background: #566277; color: #fff; }
.disabled { background: #404a5d; color: #7c8696; }
.props > .disabled { height: 12px; margin-bottom: 3px; opacity: .8; }
select:disabled, input:disabled { opacity: 1; }
.rows { display: grid; grid-template-columns: 48px minmax(0, 1fr); column-gap: 5px; row-gap: 2px; padding-right: 2px; }
.rows label { height: 10px; line-height: 10px; text-align: right; white-space: nowrap; color: #c4cad3; }
.rows hr { width: 17px; }
.rows hr + select { flex: none; width: 26px; margin-left: auto; }
.trans input { text-align: right; }
.trans svg { width: 10px; height: 8px; background: #5d7e91; }
.pick { margin-right: 12px; }
.pick svg { position: absolute; right: -12px; }

/* dock */
.desktop { flex: none; height: 33px; padding: 5px 25px 0; background: #4b4d61; overflow: hidden; }
.dock {
  height: 34px;
  padding: 5px 6px 0 5px;
  display: flex;
  justify-content: space-between;
  background: #9b9cb0;
  border-radius: 7px 7px 0 0;
}
.dock a { position: relative; width: 22px; height: 22px; border-radius: 5px; }
.dock a > svg { width: 22px; height: 22px; overflow: visible; }
.dock .thumb > svg { width: 26px; margin-left: -2px; }
.sep { width: 6px; height: 22px; border-left: 1px solid #85869a; transform: translateX(3px); }
.notify b {
  position: absolute;
  top: -3px;
  right: -4px;
  width: 11px;
  height: 11px;
  border-radius: 50%;
  background: #ef5050;
  color: #fff;
  font-size: 7px;
  line-height: 11px;
  text-align: center;
}
.tile { display: grid; place-items: center; }
.acad { background: #fff; }
.acad span { width: 16px; height: 18px; display: grid; place-items: center; align-content: center; background: #c71f45; color: #fff; }
.acad b { font-size: 10px; line-height: 11px; }
.acad small { font-size: 4px; line-height: 5px; font-weight: 700; }
.youdao { background: #e71930; color: #fff; font-size: 9px; font-weight: 900; }
.word { background: linear-gradient(90deg, #fff 3px, #2b7cd3 3px, #185abd 15px, #fff 15px); border: 3px solid #fff; }
.word span { justify-self: start; width: 9px; background: #185abd; color: #fff; font-size: 7px; font-weight: 700; line-height: 9px; text-align: center; }
.term { place-items: start; padding: 3px 0 0 3px; background: #202020; border: 1px solid #8c8d92; color: #fff; font-family: "Liberation Mono", monospace; }
.lrc { background: #05263f; color: #53b9f0; font-size: 11px; }
```
